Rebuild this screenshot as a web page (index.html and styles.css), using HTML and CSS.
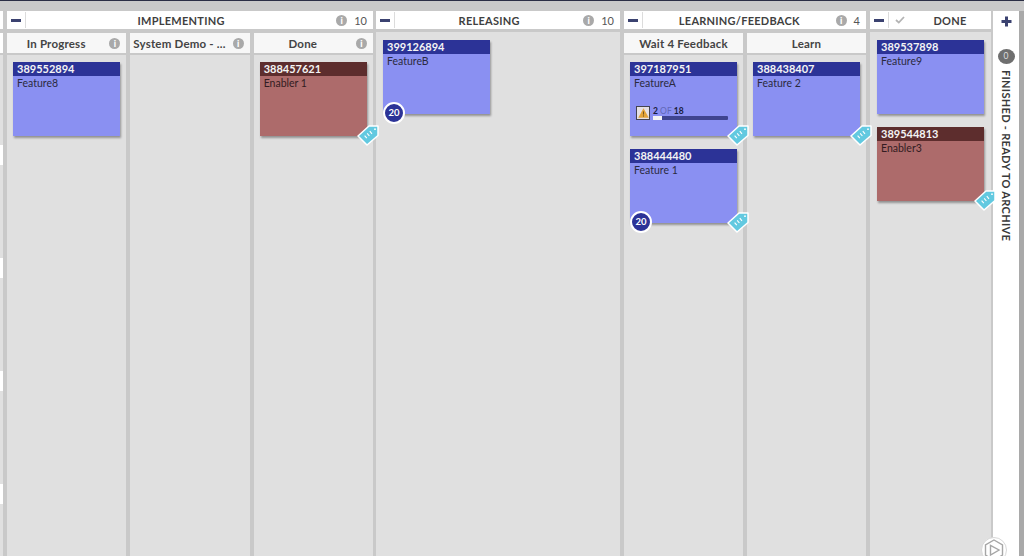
FILE: index.html
```html
<!DOCTYPE html>
<html lang="en">
<head>
    <meta charset="UTF-8">
    <meta name="viewport" content="width=device-width, initial-scale=1.0">
    <title>Kanban Board</title>
    <link rel="stylesheet" href="styles.css">
</head>
<body>
    <svg class="defs" width="0" height="0">
        <symbol id="tag" viewBox="0 0 22 21">
            <path d="M1 11 L12 1 H21 V10.5 L10 20 Z" fill="#62c9e0" stroke="#fff" stroke-width="1.5" stroke-linejoin="round"/>
            <path d="M7.6 10.6 L9.8 13.2 M10.2 8.4 L12.4 11 M12.8 6.2 L15 8.8" stroke="#fff" stroke-width="1.1"/>
            <circle cx="18" cy="4.2" r="0.9" fill="#fff"/>
        </symbol>
    </svg>

    <div class="board">
        <div class="group stub">
            <div class="group-head"></div>
            <div class="sub-head"></div>
            <div class="lane stub-lane">
                <div class="stub-cell"></div>
                <div class="stub-cell"></div>
                <div class="stub-cell"></div>
                <div class="stub-cell"></div>
            </div>
        </div>

        <div class="group implementing">
            <div class="group-head">
                <span class="toggle"><i></i></span>
                <span class="group-title">IMPLEMENTING</span>
                <span class="meta"><span class="info">i</span><span class="count">10</span></span>
            </div>
            <div class="columns">
                <div class="column">
                    <div class="sub-head"><span class="sub-title">In Progress</span><span class="info">i</span></div>
                    <div class="lane">
                        <div class="card">
                            <div class="card-id">389552894</div>
                            <div class="card-name">Feature8</div>
                        </div>
                    </div>
                </div>
                <div class="column">
                    <div class="sub-head"><span class="sub-title">System Demo - ...</span><span class="info">i</span></div>
                    <div class="lane"></div>
                </div>
                <div class="column">
                    <div class="sub-head"><span class="sub-title">Done</span><span class="info">i</span></div>
                    <div class="lane">
                        <div class="card enabler">
                            <div class="card-id">388457621</div>
                            <div class="card-name">Enabler 1</div>
                            <svg class="tag"><use href="#tag"/></svg>
                        </div>
                    </div>
                </div>
            </div>
        </div>

        <div class="group releasing">
            <div class="group-head">
                <span class="toggle"><i></i></span>
                <span class="group-title">RELEASING</span>
                <span class="meta"><span class="info">i</span><span class="count">10</span></span>
            </div>
            <div class="lane top-lane">
                <div class="card">
                    <div class="card-id">399126894</div>
                    <div class="card-name">FeatureB</div>
                    <span class="points">20</span>
                </div>
            </div>
        </div>

        <div class="group learning">
            <div class="group-head">
                <span class="toggle"><i></i></span>
                <span class="group-title">LEARNING/FEEDBACK</span>
                <span class="meta"><span class="info">i</span><span class="count">4</span></span>
            </div>
            <div class="columns">
                <div class="column">
                    <div class="sub-head"><span class="sub-title plain">Wait 4 Feedback</span></div>
                    <div class="lane">
                        <div class="card">
                            <div class="card-id">397187951</div>
                            <div class="card-name">FeatureA</div>
                            <div class="progress">
                                <span class="warn">
                                    <svg width="11" height="10" viewBox="0 0 11 10"><path d="M5.5 0.3 L10.8 9.7 H0.2 Z" fill="#e2a338"/><path d="M5.5 3.4 V6.6 M5.5 7.4 V8.6" stroke="#6a4a1a" stroke-width="0.9"/></svg>
                                </span>
                                <div class="progress-info">
                                    <div class="progress-text"><b>2</b> OF <b>18</b></div>
                                    <div class="bar"><div class="bar-fill" style="width: 12%"></div></div>
                                </div>
                            </div>
                            <svg class="tag"><use href="#tag"/></svg>
                        </div>
                        <div class="card">
                            <div class="card-id">388444480</div>
                            <div class="card-name">Feature 1</div>
                            <span class="points">20</span>
                            <svg class="tag"><use href="#tag"/></svg>
                        </div>
                    </div>
                </div>
                <div class="column">
                    <div class="sub-head"><span class="sub-title plain">Learn</span></div>
                    <div class="lane">
                        <div class="card">
                            <div class="card-id">388438407</div>
                            <div class="card-name">Feature 2</div>
                            <svg class="tag"><use href="#tag"/></svg>
                        </div>
                    </div>
                </div>
            </div>
        </div>

        <div class="group done">
            <div class="group-head">
                <span class="toggle"><i></i></span>
                <svg class="check" width="10" height="8" viewBox="0 0 10 8"><path d="M1 4 L3.8 6.6 L9 1" fill="none" stroke="#b4b4b4" stroke-width="1.8"/></svg>
                <span class="group-title">DONE</span>
            </div>
            <div class="lane top-lane">
                <div class="card">
                    <div class="card-id">389537898</div>
                    <div class="card-name">Feature9</div>
                </div>
                <div class="card enabler">
                    <div class="card-id">389544813</div>
                    <div class="card-name">Enabler3</div>
                    <svg class="tag"><use href="#tag"/></svg>
                </div>
            </div>
        </div>

        <div class="side-panel">
            <svg class="plus" width="11" height="11" viewBox="0 0 11 11"><path d="M5.5 0.5 V10.5 M0.5 5.5 H10.5" stroke="#3b4270" stroke-width="3"/></svg>
            <span class="side-count">0</span>
            <span class="side-title">FINISHED - READY TO ARCHIVE</span>
        </div>
        <div class="track"></div>
    </div>

    <div class="logo">
        <svg width="20" height="22" viewBox="0 0 20 22"><path d="M10 1 L18.5 6 V16 L10 21 L1.5 16 V6 Z" fill="none" stroke="#a6a6a6" stroke-width="1.4"/><path d="M6.5 6.5 V16 L15 11 Z" fill="none" stroke="#a6a6a6" stroke-width="1.4"/></svg>
    </div>
</body>
</html>
```

FILE: styles.css
```css
* {
    box-sizing: border-box;
}

html, body {
    height: 100%;
}

body {
    margin: 0;
    overflow: hidden;
    background: #c9c9c9;
    color: #3a3a3a;
    font-family: 'Lato', 'Liberation Sans', sans-serif;
}

.defs {
    position: absolute;
}

.board {
    display: flex;
    height: 100%;
    padding-top: 10px;
    border-top: 1px solid #2b2e45;
}

.group {
    display: flex;
    flex-direction: column;
    flex: none;
}

.stub { width: 3px; }
.implementing { width: 366px; margin-left: 4px; }
.releasing { width: 244px; margin-left: 3px; }
.learning { width: 242px; margin-left: 4px; }
.done { width: 121px; margin-left: 4px; }

.group-head {
    display: flex;
    align-items: center;
    flex: none;
    height: 18px;
    background: #fff;
    margin-bottom: 4px;
}

.toggle {
    display: flex;
    align-items: center;
    justify-content: center;
    flex: none;
    width: 19px;
    height: 16px;
    border-right: 1px solid #dcdcdc;
}

.toggle i {
    display: block;
    width: 10px;
    height: 3px;
    background: #3b4270;
}

.group-title {
    flex: 1;
    text-align: center;
    font-size: 11px;
    font-weight: 700;
    letter-spacing: 0.25px;
    color: #3f3f3f;
}

.check {
    margin-left: 6px;
}

.done .group-title {
    padding-left: 4px;
}

.meta {
    display: flex;
    align-items: center;
    gap: 7px;
    padding-right: 6px;
}

.count {
    font-size: 11px;
    color: #555;
}

.info {
    display: inline-block;
    flex: none;
    width: 11px;
    height: 11px;
    border-radius: 50%;
    background: #a9a9a9;
    color: #fff;
    font-size: 9px;
    font-weight: 900;
    line-height: 11px;
    text-align: center;
}

.columns {
    display: flex;
    flex: 1;
    gap: 4px;
    min-height: 0;
}

.column {
    display: flex;
    flex-direction: column;
    flex: 1;
    min-width: 0;
}

.sub-head {
    display: flex;
    align-items: center;
    flex: none;
    height: 20px;
    margin-bottom: 2px;
    padding-right: 6px;
    background: #f7f7f7;
}

.stub .sub-head {
    padding: 0;
    background: #fff;
}

.sub-title {
    flex: 1;
    padding-right: 4px;
    text-align: center;
    font-size: 11.5px;
    font-weight: 700;
    letter-spacing: 0.2px;
    color: #444;
    white-space: nowrap;
}

.sub-title.plain {
    padding: 0 0 0 6px;
}

.lane {
    display: flex;
    flex-direction: column;
    flex: 1;
    gap: 13px;
    padding: 7px 6px;
    background: #e0e0e0;
}

.top-lane {
    margin-top: -1px;
    padding: 8px 7px;
}

.stub-lane {
    padding: 90px 0 0;
    gap: 93px;
}

.stub-cell {
    flex: none;
    height: 20px;
    background: #fff;
}

.card {
    position: relative;
    display: flex;
    flex-direction: column;
    flex: none;
    width: 107px;
    height: 74px;
    background: #8a90f2;
    box-shadow: 1px 2px 2px rgba(0, 0, 0, 0.35);
}

.card-id {
    height: 14px;
    padding: 0 4px;
    background: #2c3397;
    color: #f4f4f4;
    font-size: 11px;
    font-weight: 700;
    line-height: 14px;
}

.card-name {
    padding: 1px 4px;
    font-size: 10.5px;
    line-height: 13px;
    color: #2a2a40;
}

.enabler {
    background: #ad6b6b;
}

.enabler .card-id {
    background: #5d2d2d;
}

.enabler .card-name {
    color: #331c22;
}

.progress {
    display: flex;
    align-items: flex-end;
    gap: 3px;
    margin-top: 15px;
    padding: 0 9px 0 6px;
}

.warn {
    display: flex;
    align-items: center;
    justify-content: center;
    flex: none;
    width: 14px;
    height: 14px;
    background: #e4e0e4;
    border: 1px solid #44444e;
}

.progress-info {
    flex: 1;
}

.progress-text {
    font-size: 8.5px;
    line-height: 9px;
    color: #6268b8;
}

.progress-text b {
    color: #1a1c3c;
}

.bar {
    height: 4px;
    border-radius: 1px;
    background: #3f4490;
}

.bar-fill {
    height: 100%;
    background: #f4f4f4;
}

.tag {
    position: absolute;
    right: -12px;
    bottom: -10px;
    width: 22px;
    height: 21px;
}

.points {
    position: absolute;
    left: 0;
    bottom: -10px;
    width: 22px;
    height: 22px;
    border: 2px solid #fff;
    border-radius: 50%;
    background: #2c3397;
    color: #fff;
    font-size: 9.5px;
    font-weight: 700;
    line-height: 18px;
    text-align: center;
}

.side-panel {
    display: flex;
    flex-direction: column;
    align-items: center;
    flex: none;
    width: 26px;
    margin-left: 2px;
    padding-top: 5px;
    background: #fff;
}

.plus {
    flex: none;
}

.side-count {
    flex: none;
    width: 17px;
    height: 15px;
    margin-top: 22px;
    border-radius: 50%;
    background: #6f6f6f;
    color: #ddd;
    font-size: 8.5px;
    line-height: 15px;
    text-align: center;
}

.side-title {
    margin-top: 6px;
    writing-mode: vertical-rl;
    font-size: 11px;
    font-weight: 700;
    letter-spacing: 0.3px;
    color: #3a3a3a;
    white-space: nowrap;
}

.track {
    flex: 1;
    background: #a9a9a9;
}

.logo {
    position: absolute;
    left: 981px;
    top: 537px;
    display: flex;
    align-items: center;
    justify-content: center;
    width: 26px;
    height: 26px;
    border: 1px solid #d8d8d8;
    border-radius: 50%;
    background: #fff;
}
```
